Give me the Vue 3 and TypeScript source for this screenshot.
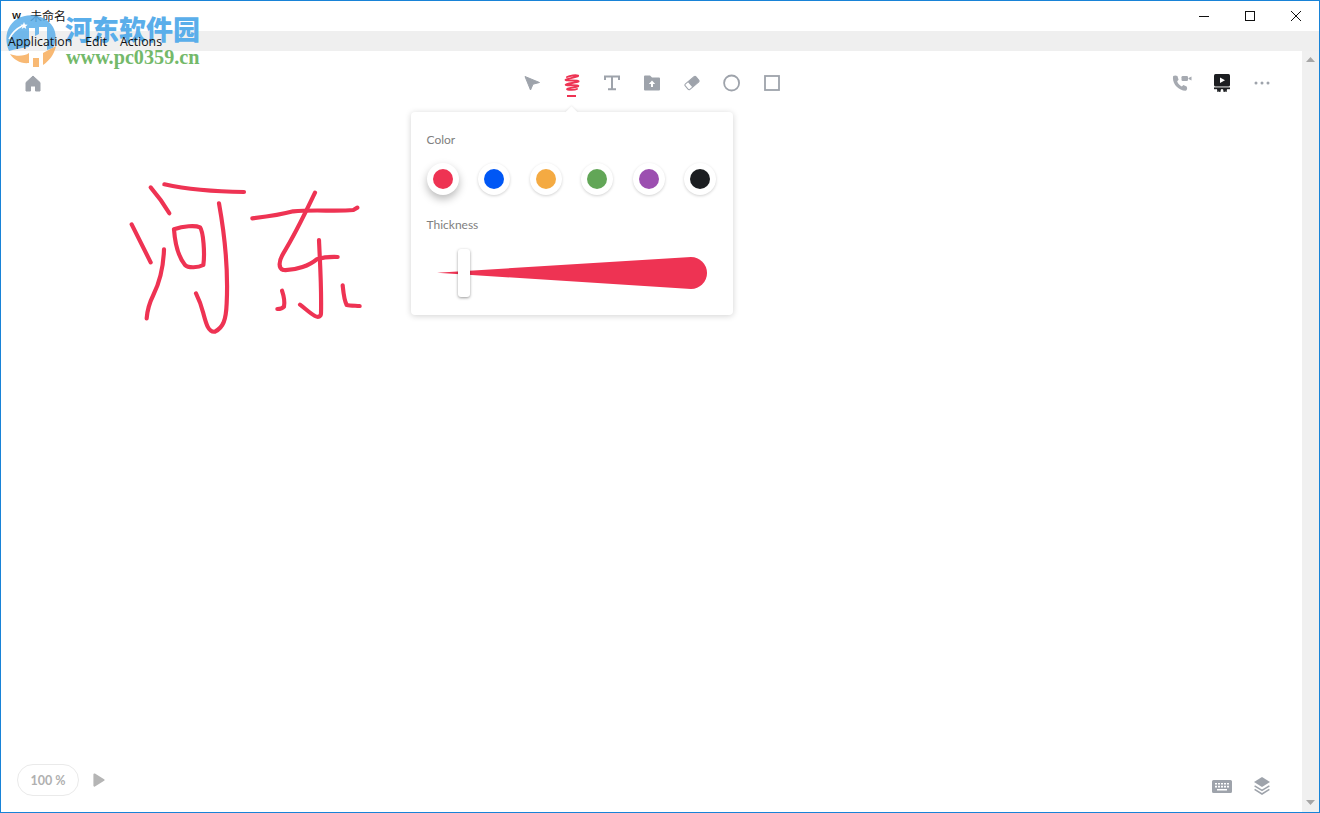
<script setup lang="ts">
const swatches: { name: string; color: string; active?: boolean }[] = [
  { name: 'red', color: '#ee3353', active: true },
  { name: 'blue', color: '#0057f5' },
  { name: 'orange', color: '#f4aa42' },
  { name: 'green', color: '#62a657' },
  { name: 'purple', color: '#9c4fb0' },
  { name: 'black', color: '#1c1e21' },
]
const strokes: string[] = [
  'M92 52 Q125 90 148 130',
  'M133 43 C200 58 260 65 372 66',
  'M35 163 L92 277',
  'M132 238 C130 300 115 345 100 375 C90 395 82 420 80 445',
  'M162 178 C190 168 225 165 240 172 C250 185 255 250 250 285 C235 293 205 295 195 285 C175 260 165 220 162 178',
  'M297 100 C315 200 325 300 320 400 C318 450 310 472 285 485 C265 488 258 460 250 430 C245 410 238 390 228 370',
  'M397 145 C440 140 480 135 520 124 C580 118 650 125 700 120 L712 113',
  'M585 68 C560 120 530 185 490 250 C475 275 475 295 490 300 C530 302 570 285 590 268 C610 262 630 260 653 261',
  'M597 210 C600 280 605 350 603 430 C603 440 595 443 585 438 C570 430 555 415 540 404',
  'M486 362 C492 380 495 395 492 410 C488 415 480 417 472 417',
  'M668 346 C670 365 672 390 680 405 C690 407 705 407 719 408',
]
</script>

<template>
  <div class="window">
    <header class="titlebar">
      <span class="app-mark">w</span>
      <span class="doc-title">未命名</span>
      <div class="controls">
        <span class="ctl"><svg width="12" height="12" viewBox="0 0 12 12"><path d="M1 6.5h10" stroke="#111" fill="none" /></svg></span>
        <span class="ctl"><svg width="12" height="12" viewBox="0 0 12 12"><rect x="1.5" y="1.5" width="9" height="9" stroke="#111" fill="none" /></svg></span>
        <span class="ctl"><svg width="12" height="12" viewBox="0 0 12 12"><path d="M1 1l10 10M11 1L1 11" stroke="#111" fill="none" /></svg></span>
      </div>
    </header>
    <nav class="menubar">
      <span>Application</span>
      <span>Edit</span>
      <span>Actions</span>
    </nav>
    <div class="body">
      <main class="canvas">
        <svg class="ink" width="250" height="170" viewBox="0 0 750 510">
          <path v-for="(d, i) in strokes" :key="i" :d="d" fill="none" stroke="#ee3353" stroke-width="12.5" stroke-linecap="round" stroke-linejoin="round" />
        </svg>

        <div class="topbar">
          <div class="group left">
            <button class="tool">
              <svg width="16" height="17" viewBox="0 0 16 17"><path d="M8 1 L15 7.5 V16 H10.5 V11 H5.5 V16 H1 V7.5 Z" fill="#9ea3ab" stroke="#9ea3ab" stroke-linejoin="round" /></svg>
            </button>
          </div>
          <div class="group center">
            <button class="tool">
              <svg width="16" height="16" viewBox="0 0 16 16"><path d="M1 1.5 L15.5 7.5 L9 9.2 L6.5 15 Z" fill="#9ea3ab" stroke="#9ea3ab" stroke-linejoin="round" /></svg>
            </button>
            <div class="tool-wrap">
              <button class="tool">
                <svg width="16" height="18" viewBox="0 0 16 18"><path d="M3 3 C6 1.5 12 .8 14 1.6 C15.5 2.8 3 4.4 1.6 5.8 C.8 7.2 14 5.8 14.6 7.2 C15 8.6 1.8 9.4 1.6 10.8 C1.6 12 14 10.4 14.4 12 C14.6 13.2 3 14 3 15 C3.4 16.4 11 16 13 15" fill="none" stroke="#ee3353" stroke-width="1.9" stroke-linecap="round" /></svg>
                <span class="underline"></span>
              </button>
              <section class="panel">
                <span class="caret"></span>
                <div class="label">Color</div>
                <div class="swatches">
                  <span v-for="s in swatches" :key="s.name" class="swatch" :class="{ active: s.active }">
                    <i :style="{ background: s.color }"></i>
                  </span>
                </div>
                <div class="label thick">Thickness</div>
                <div class="slider">
                  <svg width="290" height="48" viewBox="0 0 290 48"><path d="M10 23.7 L264 8 A16 16 0 0 1 264 40 Z" fill="#ee3353" /></svg>
                  <span class="handle"></span>
                </div>
              </section>
            </div>
            <button class="tool">
              <svg width="16" height="16" viewBox="0 0 16 16"><path d="M1 5V1.6H15V5M8 1.6V14M4 14.2H12" fill="none" stroke="#9ea3ab" stroke-width="2" /></svg>
            </button>
            <button class="tool">
              <svg width="16" height="16" viewBox="0 0 16 16"><path fill-rule="evenodd" d="M0 1.5 A1 1 0 0 1 1 .5 H6 L8 2.5 H15 A1 1 0 0 1 16 3.5 V14.5 A1 1 0 0 1 15 15.5 H1 A1 1 0 0 1 0 14.5 Z M8 5.5 L4.8 9 H7 V12 H9 V9 H11.2 Z" fill="#9ea3ab" /></svg>
            </button>
            <button class="tool">
              <svg width="16" height="16" viewBox="0 0 16 16"><g transform="rotate(-40 8 8)"><rect x="1" y="4.5" width="14" height="7" rx="1.4" fill="#fff" stroke="#9ea3ab" /><path d="M5.5 4.5 H13.6 A1.4 1.4 0 0 1 15 5.9 V10.1 A1.4 1.4 0 0 1 13.6 11.5 H5.5 Z" fill="#9ea3ab" /></g></svg>
            </button>
            <button class="tool">
              <svg width="18" height="18" viewBox="0 0 18 18"><circle cx="8.6" cy="9" r="7.5" fill="none" stroke="#9ea3ab" stroke-width="1.8" /></svg>
            </button>
            <button class="tool">
              <svg width="16" height="16" viewBox="0 0 16 16"><rect x="1" y="1" width="14" height="14" fill="none" stroke="#9ea3ab" stroke-width="1.8" /></svg>
            </button>
          </div>
          <div class="group right">
            <button class="tool">
              <svg width="20" height="16" viewBox="0 0 20 16"><path d="M1.2 1 C-.5 8 6 15.5 13.5 15.8 C15.2 15.6 15.6 13 14.6 11.4 L11.4 10 L9.8 11.4 C7.6 10.6 5.8 8.4 5.2 6.2 L6.6 4.8 L5.4 1 C4 .2 2.4 .2 1.2 1 Z" fill="#a6aab1" /><rect x="9.5" y="1" width="6.5" height="5" rx="1.2" fill="#a6aab1" /><path d="M16.5 3 L19.5 1.6 V5.4 L16.5 4 Z" fill="#a6aab1" /></svg>
            </button>
            <button class="tool">
              <svg width="16" height="18" viewBox="0 0 16 18"><rect x="0" y="0" width="16" height="12.5" rx="1.5" fill="#1c1e21" /><path d="M6 3.4 L11 6.2 L6 9 Z" fill="#fff" /><rect x="0" y="13.4" width="16" height="1.8" fill="#1c1e21" /><path d="M3 15 H7 L6.4 18 H5.2 L5 16.4 L4.4 18 H3.4 Z M9 15 H13 L12.6 18 H11.6 L11 16.4 L10.8 18 H9.6 Z" fill="#1c1e21" /></svg>
            </button>
            <button class="tool">
              <svg width="16" height="4" viewBox="0 0 16 4"><circle cx="2" cy="2" r="1.5" fill="#9ea3ab" /><circle cx="8" cy="2" r="1.5" fill="#9ea3ab" /><circle cx="14" cy="2" r="1.5" fill="#9ea3ab" /></svg>
            </button>
          </div>
        </div>

        <div class="bottombar">
          <div class="zoom-box">
            <span class="pill">100 %</span>
            <svg class="play" width="12" height="14" viewBox="0 0 12 14"><path d="M1.4 1.4 L10.6 7 L1.4 12.6 Z" fill="#b5b5b5" stroke="#b5b5b5" stroke-width="2" stroke-linejoin="round" /></svg>
          </div>
          <div class="group right">
            <button class="tool">
              <svg width="20" height="13" viewBox="0 0 20 13"><path fill-rule="evenodd" d="M1.5 0 H18.5 A1.5 1.5 0 0 1 20 1.5 V11.5 A1.5 1.5 0 0 1 18.5 13 H1.5 A1.5 1.5 0 0 1 0 11.5 V1.5 A1.5 1.5 0 0 1 1.5 0 Z M3 3 V4.6 H5 V3 Z M6 3 V4.6 H8 V3 Z M9 3 V4.6 H11 V3 Z M12 3 V4.6 H14 V3 Z M15 3 V4.6 H17 V3 Z M3 5.8 V7.4 H5 V5.8 Z M6 5.8 V7.4 H8 V5.8 Z M9 5.8 V7.4 H11 V5.8 Z M12 5.8 V7.4 H14 V5.8 Z M15 5.8 V7.4 H17 V5.8 Z M5 9 V10.6 H15 V9 Z" fill="#9ea3ab" /></svg>
            </button>
            <button class="tool">
              <svg width="16" height="18" viewBox="0 0 16 18"><path d="M8 0 L16 5 L8 10 L0 5 Z" fill="#9ea3ab" /><path d="M.6 8.8 L8 13.4 L15.4 8.8 M.6 12.4 L8 17 L15.4 12.4" fill="none" stroke="#9ea3ab" stroke-width="1.5" /></svg>
            </button>
          </div>
        </div>
      </main>
      <aside class="scrollbar">
        <svg width="9" height="5" viewBox="0 0 9 5"><path d="M4.5 0 L9 5 H0 Z" fill="#a6a6a6" /></svg>
        <svg width="9" height="5" viewBox="0 0 9 5"><path d="M0 0 H9 L4.5 5 Z" fill="#a6a6a6" /></svg>
      </aside>
    </div>

    <div class="watermark">
      <svg class="wm-logo" width="60" height="70" viewBox="0 0 60 70">
        <path d="M8 50 C3 38 5 25 16 18 C28 11 45 14 52 26 C56 33 55 41 52 47 L46 49 V26 H38 V33 L34 35 V27 H28 V46 C20 47 14 48 8 50 Z" fill="#5aaeea" />
        <path d="M9 53 C16 56 24 55 28 52 L28 62 C20 63 13 59 9 53 Z M32 57 H38 V66 C35 66 33 66 32 66 Z M42 52 L55 45 C53 54 48 60 42 64 Z" fill="#f7ad5c" />
        <path d="M23 21 l1 2.6 2.7 .2 -2.1 1.7 .7 2.6 -2.3-1.5 -2.3 1.5 .7-2.6 -2.1-1.7 2.7-.2 Z" fill="#fff" />
        <path d="M8 38 C11 32 15 28 21 25" stroke="#fff" stroke-width="1.6" fill="none" />
      </svg>
      <div class="wm-cn">河东软件园</div>
      <div class="wm-url">www.pc0359.cn</div>
    </div>
  </div>
</template>

<style>
html, body { margin: 0; background: #fff; }
</style>

<style scoped>
.window {
  position: relative;
  box-sizing: border-box;
  width: 1320px;
  height: 813px;
  border: 1px solid #1883d7;
  display: flex;
  flex-direction: column;
  overflow: hidden;
  font-family: "Open Sans", "Noto Sans CJK SC", sans-serif;
  color: #111;
  background: #fff;
}
.titlebar {
  height: 30px;
  flex: none;
  display: flex;
  align-items: center;
  padding-left: 11px;
  font-size: 12px;
}
.app-mark { font-weight: 600; font-size: 11px; width: 18px; margin-top: -4px; }
.doc-title { font-family: "Noto Sans CJK SC", sans-serif; font-size: 12px; margin-top: -2px; }
.controls { margin-left: auto; display: flex; height: 100%; }
.ctl { width: 46px; display: flex; align-items: center; justify-content: center; margin-top: -1px; }
.menubar {
  height: 20px;
  flex: none;
  background: #efefef;
  display: flex;
  align-items: center;
  gap: 13px;
  padding-left: 7px;
  font-size: 12.3px;
}
.menubar span { position: relative; z-index: 6; }
.body { flex: 1; display: flex; min-height: 0; }
.canvas {
  position: relative;
  flex: 1;
  display: flex;
  flex-direction: column;
  justify-content: space-between;
  font-family: Lato, sans-serif;
}
.ink { position: absolute; left: 119px; top: 119px; }
.topbar {
  position: relative;
  height: 64px;
  display: grid;
  grid-template-columns: 1fr auto 1fr;
  align-items: center;
}
.group { display: flex; align-items: center; }
.group.left { padding-left: 12px; }
.group.right { padding-right: 20px; justify-content: flex-end; }
.tool-wrap { position: relative; }
.tool {
  position: relative;
  width: 40px;
  height: 32px;
  padding: 0;
  border: 0;
  background: none;
  display: flex;
  align-items: center;
  justify-content: center;
}
.underline {
  position: absolute;
  left: 15.5px;
  bottom: 2px;
  width: 9px;
  height: 2px;
  background: #ee3353;
}
.panel {
  position: absolute;
  z-index: 2;
  top: 45px;
  left: 50%;
  transform: translateX(-50%);
  box-sizing: border-box;
  width: 322px;
  height: 203px;
  padding: 20px 16px 18px;
  background: #fff;
  border-radius: 4px;
  box-shadow: 0 1px 6px rgba(0, 0, 0, 0.18);
}
.caret {
  position: absolute;
  top: -4px;
  left: 50%;
  width: 9px;
  height: 9px;
  margin-left: -4.5px;
  background: #fff;
  transform: rotate(45deg);
  box-shadow: -1px -1px 2px rgba(0, 0, 0, 0.05);
}
.label { font-size: 12px; line-height: 16px; color: #808080; }
.thick { margin-top: 22px; }
.swatches { display: flex; justify-content: space-between; margin-top: 15px; }
.swatch {
  width: 32px;
  height: 32px;
  border-radius: 50%;
  background: #fff;
  display: flex;
  align-items: center;
  justify-content: center;
  box-shadow: 0 1px 3px rgba(0, 0, 0, 0.18);
}
.swatch.active { box-shadow: 0 4px 8px rgba(0, 0, 0, 0.28); }
.swatch i { width: 20px; height: 20px; border-radius: 50%; display: block; }
.slider { position: relative; height: 48px; margin-top: 16px; }
.slider svg { display: block; }
.handle {
  position: absolute;
  left: 31px;
  top: 0;
  width: 12px;
  height: 48px;
  box-sizing: border-box;
  background: #fff;
  border-radius: 3px;
  box-shadow: 0 1px 3px rgba(0, 0, 0, 0.4);
}
.bottombar {
  display: flex;
  justify-content: space-between;
  align-items: flex-end;
  padding-left: 16px;
  padding-bottom: 10px;
}
.zoom-box { display: flex; align-items: center; gap: 14px; margin-bottom: 6px; }
.pill {
  box-sizing: border-box;
  width: 62px;
  height: 32px;
  border: 1px solid #eaeaea;
  border-radius: 16px;
  display: flex;
  align-items: center;
  justify-content: center;
  font-size: 12.5px;
  font-weight: 700;
  color: #b0b0b0;
}
.play { margin-top: -1px; }
.scrollbar {
  width: 17px;
  flex: none;
  background: #f0f0f0;
  display: flex;
  flex-direction: column;
  align-items: center;
  justify-content: space-between;
  padding: 6px 0 7px;
  box-sizing: border-box;
}
.watermark { position: absolute; left: 0; top: 0; pointer-events: none; z-index: 5; }
.wm-logo { position: absolute; left: 0; top: 0; opacity: 0.85; }
.wm-cn {
  position: absolute;
  left: 64px;
  top: 9px;
  width: 140px;
  font-family: "Noto Sans CJK SC", sans-serif;
  font-size: 27px;
  line-height: 38px;
  font-weight: 900;
  color: #5aaeea;
  white-space: nowrap;
}
.wm-url {
  position: absolute;
  left: 65px;
  top: 46px;
  font-family: "Liberation Serif", serif;
  font-size: 20.2px;
  line-height: 21px;
  font-weight: 700;
  color: #74b96a;
  white-space: nowrap;
}
</style>
